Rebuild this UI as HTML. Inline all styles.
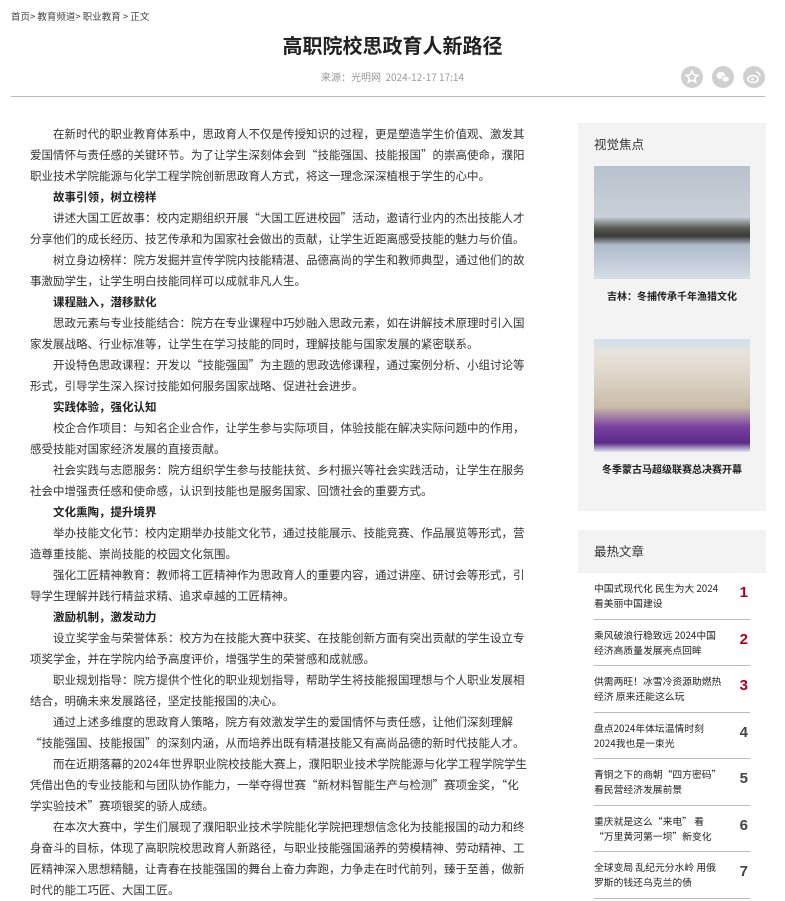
<!DOCTYPE html>
<html><head><meta charset="utf-8">
<style>
*{margin:0;padding:0;box-sizing:border-box}
body{width:785px;height:900px;overflow:hidden;background:#fff;font-family:"Noto Sans CJK SC","Liberation Sans",sans-serif;color:#333;position:relative}
.crumb{position:absolute;left:11px;top:9px;font-size:9.5px;color:#444}
h1{position:absolute;left:0;width:785px;text-align:center;top:31px;font-size:20px;font-weight:bold;color:#222;line-height:28px}
.meta{position:absolute;left:0;width:785px;text-align:center;top:69px;font-size:10px;color:#999}
.icons{position:absolute;top:66px;left:681px;display:flex;gap:9px}
.icons span{width:22px;height:22px;border-radius:50%;background:#d0d0d0;display:block}
.hr{position:absolute;left:11px;top:96px;width:754px;height:1px;background:#bbb}
.main{position:absolute;left:30px;top:124px;width:484px;font-size:11.5px;line-height:21px;color:#333}
.main div{white-space:nowrap;height:21px}
.main .f{text-align:justify;text-align-last:justify}
.main .i{padding-left:23px}
.main .b{font-weight:bold;color:#222;padding-left:23px}
.box1{position:absolute;left:578px;top:123px;width:188px;height:388px;background:#f3f3f3}
.box1 h3,.box2 h3{font-weight:normal;font-size:12.5px;color:#333;position:absolute;left:16px;top:11px}
.img{position:absolute;left:16px;width:156px;height:113px}
.cap{position:absolute;left:0;width:188px;text-align:center;font-size:10px;font-weight:bold;color:#222}
.box2{position:absolute;left:578px;top:530px;width:188px;height:43px;background:#f3f3f3}
.list{position:absolute;left:594px;top:573px;width:156px}
.it{height:46.5px;border-bottom:1px solid #bbb;position:relative;font-size:9.8px;line-height:15px;color:#222;padding-top:8px;white-space:nowrap}
.it b{position:absolute;right:2px;top:12px;font-size:15px;color:#444;font-family:"Liberation Sans",sans-serif}
.it b.r{color:#b3001b}
</style></head><body>
<div class="crumb">首页&gt; 教育频道&gt; 职业教育 &gt; 正文</div>
<h1>高职院校思政育人新路径</h1>
<div class="meta">来源：光明网&nbsp;&nbsp;2024-12-17 17:14</div>
<div class="icons">
<span><svg width="22" height="22" viewBox="0 0 22 22"><path d="M11 5l1.8 3.8 4 .5-3 2.8.8 4-3.6-2-3.6 2 .8-4-3-2.8 4-.5z" fill="none" stroke="#fff" stroke-width="1.6"/></svg></span>
<span><svg width="22" height="22" viewBox="0 0 22 22"><ellipse cx="9" cy="9.5" rx="4.5" ry="3.6" fill="#fff"/><ellipse cx="13.5" cy="13" rx="3.8" ry="3" fill="#fff" stroke="#d0d0d0" stroke-width="1"/></svg></span>
<span><svg width="22" height="22" viewBox="0 0 22 22"><ellipse cx="10" cy="13" rx="5" ry="3.5" fill="none" stroke="#fff" stroke-width="1.6"/><circle cx="9.5" cy="13" r="1.3" fill="#fff"/><path d="M13 6a4 4 0 0 1 4 4" stroke="#fff" stroke-width="1.4" fill="none"/></svg></span>
</div>
<div class="hr"></div>
<div class="main">
<div class="f i">在新时代的职业教育体系中，思政育人不仅是传授知识的过程，更是塑造学生价值观、激发其</div>
<div class="f">爱国情怀与责任感的关键环节。为了让学生深刻体会到“技能强国、技能报国”的崇高使命，濮阳</div>
<div>职业技术学院能源与化学工程学院创新思政育人方式，将这一理念深深植根于学生的心中。</div>
<div class="b">故事引领，树立榜样</div>
<div class="f i">讲述大国工匠故事：校内定期组织开展“大国工匠进校园”活动，邀请行业内的杰出技能人才</div>
<div>分享他们的成长经历、技艺传承和为国家社会做出的贡献，让学生近距离感受技能的魅力与价值。</div>
<div class="f i">树立身边榜样：院方发掘并宣传学院内技能精湛、品德高尚的学生和教师典型，通过他们的故</div>
<div>事激励学生，让学生明白技能同样可以成就非凡人生。</div>
<div class="b">课程融入，潜移默化</div>
<div class="f i">思政元素与专业技能结合：院方在专业课程中巧妙融入思政元素，如在讲解技术原理时引入国</div>
<div>家发展战略、行业标准等，让学生在学习技能的同时，理解技能与国家发展的紧密联系。</div>
<div class="f i">开设特色思政课程：开发以“技能强国”为主题的思政选修课程，通过案例分析、小组讨论等</div>
<div>形式，引导学生深入探讨技能如何服务国家战略、促进社会进步。</div>
<div class="b">实践体验，强化认知</div>
<div class="f i">校企合作项目：与知名企业合作，让学生参与实际项目，体验技能在解决实际问题中的作用，</div>
<div>感受技能对国家经济发展的直接贡献。</div>
<div class="f i">社会实践与志愿服务：院方组织学生参与技能扶贫、乡村振兴等社会实践活动，让学生在服务</div>
<div>社会中增强责任感和使命感，认识到技能也是服务国家、回馈社会的重要方式。</div>
<div class="b">文化熏陶，提升境界</div>
<div class="f i">举办技能文化节：校内定期举办技能文化节，通过技能展示、技能竞赛、作品展览等形式，营</div>
<div>造尊重技能、崇尚技能的校园文化氛围。</div>
<div class="f i">强化工匠精神教育：教师将工匠精神作为思政育人的重要内容，通过讲座、研讨会等形式，引</div>
<div>导学生理解并践行精益求精、追求卓越的工匠精神。</div>
<div class="b">激励机制，激发动力</div>
<div class="f i">设立奖学金与荣誉体系：校方为在技能大赛中获奖、在技能创新方面有突出贡献的学生设立专</div>
<div>项奖学金，并在学院内给予高度评价，增强学生的荣誉感和成就感。</div>
<div class="f i">职业规划指导：院方提供个性化的职业规划指导，帮助学生将技能报国理想与个人职业发展相</div>
<div>结合，明确未来发展路径，坚定技能报国的决心。</div>
<div class="i">通过上述多维度的思政育人策略，院方有效激发学生的爱国情怀与责任感，让他们深刻理解</div>
<div>“技能强国、技能报国”的深刻内涵，从而培养出既有精湛技能又有高尚品德的新时代技能人才。</div>
<div class="f i">而在近期落幕的2024年世界职业院校技能大赛上，濮阳职业技术学院能源与化学工程学院学生</div>
<div class="f">凭借出色的专业技能和与团队协作能力，一举夺得世赛“新材料智能生产与检测”赛项金奖，“化</div>
<div>学实验技术”赛项银奖的骄人成绩。</div>
<div class="f i">在本次大赛中，学生们展现了濮阳职业技术学院能化学院把理想信念化为技能报国的动力和终</div>
<div class="f">身奋斗的目标，体现了高职院校思政育人新路径，与职业技能强国涵养的劳模精神、劳动精神、工</div>
<div class="f">匠精神深入思想精髓，让青春在技能强国的舞台上奋力奔跑，力争走在时代前列，臻于至善，做新</div>
<div>时代的能工巧匠、大国工匠。</div>
</div>
<div class="box1">
<h3>视觉焦点</h3>
<div class="img" style="top:43px;background:linear-gradient(180deg,#b8c2cc 0%,#c9d0d8 45%,#5a5a55 55%,#3a3a38 62%,#b0bccb 70%,#d6dde6 100%)"></div>
<div class="cap" style="top:165px">吉林：冬捕传承千年渔猎文化</div>
<div class="img" style="top:216px;background:linear-gradient(180deg,#cfe0f0 0%,#e8e4dc 12%,#d8cfc0 40%,#c9bca8 60%,#7a3fa0 78%,#5a2c86 92%,#e0e6ee 100%)"></div>
<div class="cap" style="top:338px">冬季蒙古马超级联赛总决赛开幕</div>
</div>
<div class="box2"><h3>最热文章</h3></div>
<div class="list">
<div class="it">中国式现代化 民生为大 2024<br>看美丽中国建设<b class="r">1</b></div>
<div class="it">乘风破浪行稳致远 2024中国<br>经济高质量发展亮点回眸<b class="r">2</b></div>
<div class="it">供需两旺！冰雪冷资源助燃热<br>经济 原来还能这么玩<b class="r">3</b></div>
<div class="it">盘点2024年体坛温情时刻<br>2024我也是一束光<b>4</b></div>
<div class="it">青铜之下的商朝“四方密码”<br>看民营经济发展前景<b>5</b></div>
<div class="it">重庆就是这么“来电” 看<br>“万里黄河第一坝”新变化<b>6</b></div>
<div class="it">全球变局 乱纪元分水岭 用俄<br>罗斯的钱还乌克兰的债<b>7</b></div>
</div>
</body></html>
